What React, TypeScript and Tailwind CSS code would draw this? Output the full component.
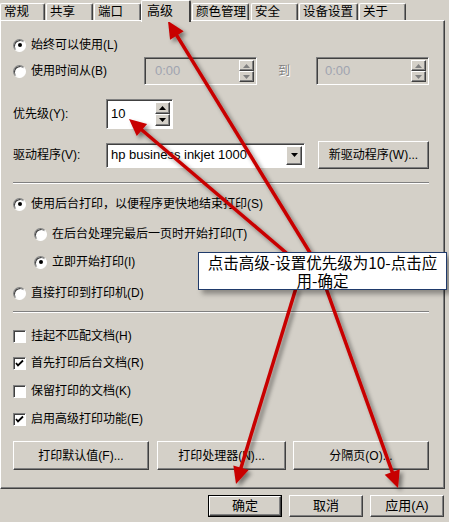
import React from "react";

const sunken =
  "border border-t-[#808080] border-l-[#808080] border-b-white border-r-white shadow-[inset_1px_1px_0_#404040]";
const raised =
  "border border-t-white border-l-white border-b-[#404040] border-r-[#404040] shadow-[inset_-1px_-1px_0_#808080]";

const tabs = [
  { label: "常规", w: "w-[45px]", ml: "ml-0" },
  { label: "共享", w: "w-[47px]", ml: "ml-[1px]" },
  { label: "端口", w: "w-[47px]", ml: "ml-[1px]" },
  { label: "高级", w: "w-[50px]", ml: "ml-0", active: true },
  { label: "颜色管理", w: "w-[57px]", ml: "ml-[1px]" },
  { label: "安全", w: "w-[47px]", ml: "ml-[2px]" },
  { label: "设备设置", w: "w-[59px]", ml: "ml-[1px]" },
  { label: "关于", w: "w-[47px]", ml: "ml-[1px]" },
];

function Triangle({ up, gray }: { up?: boolean; gray?: boolean }) {
  return (
    <svg width="7" height="4" viewBox="0 0 7 4">
      <polygon
        points={up ? "3.5,0 7,4 0,4" : "0,0 7,0 3.5,4"}
        fill={gray ? "#808080" : "#000"}
      />
    </svg>
  );
}

function Spinner({ gray }: { gray?: boolean }) {
  return (
    <div className="flex flex-col w-[15px] h-full">
      <div className={`${raised} flex-1 flex items-center justify-center bg-[#d4d0c8]`}>
        <Triangle up gray={gray} />
      </div>
      <div className={`${raised} flex-1 flex items-center justify-center bg-[#d4d0c8]`}>
        <Triangle gray={gray} />
      </div>
    </div>
  );
}

function Radio({ checked }: { checked?: boolean }) {
  return (
    <div className="w-[13px] h-[13px] rounded-full bg-white border border-t-[#808080] border-l-[#808080] border-b-white border-r-white shadow-[inset_1px_1px_0_#404040] flex items-center justify-center shrink-0">
      {checked && <div className="w-[4px] h-[4px] rounded-full bg-black" />}
    </div>
  );
}

function Check({ checked }: { checked?: boolean }) {
  return (
    <div className={`${sunken} w-[13px] h-[13px] bg-white flex items-center justify-center shrink-0`}>
      {checked && (
        <svg width="9" height="9" viewBox="0 0 9 9">
          <path d="M1 4 L3 6.5 L8 1.5" stroke="#000" strokeWidth="1.8" fill="none" />
        </svg>
      )}
    </div>
  );
}

function Arrow({ x1, y1, x2, y2 }: { x1: number; y1: number; x2: number; y2: number }) {
  const len = Math.hypot(x2 - x1, y2 - y1);
  const ux = (x2 - x1) / len;
  const uy = (y2 - y1) / len;
  const L = 17;
  const W = 8;
  const bx = x2 - ux * L;
  const by = y2 - uy * L;
  const nx = -uy;
  const ny = ux;
  const pts = `${x2},${y2} ${bx + nx * W},${by + ny * W} ${bx - nx * W},${by - ny * W}`;
  return (
    <g filter="url(#shadow)">
      <line x1={x1} y1={y1} x2={bx + ux * 2} y2={by + uy * 2} stroke="#c80000" strokeWidth="3.5" />
      <polygon points={pts} fill="#c80000" />
    </g>
  );
}

export default function App() {
  return (
    <div className="relative w-[449px] h-[522px] overflow-hidden bg-[#d4d0c8] text-[12px] text-black font-['Liberation_Sans','Noto_Sans_CJK_SC',sans-serif]">
      {/* tab strip */}
      <div className="flex items-end h-[20px]">
        {tabs.map((t) =>
          t.active ? (
            <div
              key={t.label}
              className={`${t.w} ${t.ml} relative z-10 h-[22px] -mb-[2px] bg-[#d4d0c8] border-t border-l border-t-white border-l-white border-r-2 border-r-[#404040] rounded-t-[2px] pl-[5px] pt-[2px] leading-[16px] text-[13px] whitespace-nowrap`}
            >
              {t.label}
            </div>
          ) : (
            <div
              key={t.label}
              className={`${t.w} ${t.ml} h-[17px] border-t border-l border-t-white border-l-white border-r border-r-[#404040] shadow-[inset_-1px_0_0_#808080] rounded-t-[2px] pl-[3px] leading-[16px] text-[12.5px] whitespace-nowrap overflow-hidden`}
            >
              {t.label}
            </div>
          )
        )}
      </div>

      {/* panel */}
      <div className="w-[445px] h-[469px] border-t border-l border-t-white border-l-white border-r border-b border-r-[#404040] border-b-[#404040] shadow-[inset_-1px_-1px_0_#808080] flex flex-col">
        <div className="mt-[14px] h-[20px] flex items-center pl-[12px] gap-[5px]">
          <Radio checked />
          <span>始终可以使用(L)</span>
        </div>

        <div className="mt-[2px] h-[28px] flex items-center pl-[12px]">
          <Radio />
          <span className="ml-[5px] w-[113px]">使用时间从(B)</span>
          <div className={`${sunken} w-[113px] h-[28px] bg-[#d4d0c8] flex items-center justify-between pl-[10px] pr-[2px] py-[2px]`}>
            <span className="text-[13px] text-[#a0a4b0]">0:00</span>
            <Spinner gray />
          </div>
          <span className="ml-[21px] w-[38px] text-[#808080] [text-shadow:1px_1px_0_#fff]">到</span>
          <div className={`${sunken} w-[113px] h-[28px] bg-[#d4d0c8] flex items-center justify-between pl-[8px] pr-[2px] py-[2px]`}>
            <span className="text-[13px] text-[#a0a4b0]">0:00</span>
            <Spinner gray />
          </div>
        </div>

        <div className="mt-[14px] h-[30px] flex items-center pl-[12px]">
          <span className="w-[93px]">优先级(Y):</span>
          <div className={`${sunken} w-[67px] h-[30px] bg-white flex items-center justify-between pl-[4px] pr-[2px] py-[2px]`}>
            <span className="text-[13px]">10</span>
            <Spinner />
          </div>
        </div>

        <div className="mt-[12px] h-[28px] flex items-center pl-[12px]">
          <span className="w-[93px]">驱动程序(V):</span>
          <div className={`${sunken} w-[199px] h-[25px] bg-white flex items-center justify-between pl-[4px] pr-[2px] py-[2px]`}>
            <span className="text-[13px]">hp business inkjet 1000</span>
            <div className={`${raised} w-[16px] h-full bg-[#d4d0c8] flex items-center justify-center`}>
              <Triangle />
            </div>
          </div>
          <div className={`${raised} ml-[13px] w-[111px] h-[28px] flex items-center justify-center`}>
            新驱动程序(W)...
          </div>
        </div>

        <div className="mt-[13px] ml-[12px] w-[416px] h-[2px] border-t border-t-[#808080] border-b border-b-white" />

        <div className="mt-[10px] h-[20px] flex items-center pl-[12px] gap-[5px]">
          <Radio checked />
          <span>使用后台打印，以便程序更快地结束打印(S)</span>
        </div>
        <div className="mt-[10px] h-[20px] flex items-center pl-[33px] gap-[5px]">
          <Radio />
          <span>在后台处理完最后一页时开始打印(T)</span>
        </div>
        <div className="mt-[8px] h-[20px] flex items-center pl-[33px] gap-[5px]">
          <Radio checked />
          <span>立即开始打印(I)</span>
        </div>
        <div className="mt-[11px] h-[20px] flex items-center pl-[12px] gap-[5px]">
          <Radio />
          <span>直接打印到打印机(D)</span>
        </div>

        <div className="mt-[8px] ml-[12px] w-[416px] h-[2px] border-t border-t-[#808080] border-b border-b-white" />

        <div className="mt-[13px] h-[20px] flex items-center pl-[12px] gap-[5px]">
          <Check />
          <span>挂起不匹配文档(H)</span>
        </div>
        <div className="mt-[7px] h-[20px] flex items-center pl-[12px] gap-[5px]">
          <Check checked />
          <span>首先打印后台文档(R)</span>
        </div>
        <div className="mt-[8px] h-[20px] flex items-center pl-[12px] gap-[5px]">
          <Check />
          <span>保留打印的文档(K)</span>
        </div>
        <div className="mt-[8px] h-[20px] flex items-center pl-[12px] gap-[5px]">
          <Check checked />
          <span>启用高级打印功能(E)</span>
        </div>

        <div className="mt-[12px] h-[29px] flex pl-[12px]">
          <div className={`${raised} w-[136px] flex items-center justify-center`}>打印默认值(F)...</div>
          <div className={`${raised} ml-[8px] w-[129px] flex items-center justify-center`}>打印处理器(N)...</div>
          <div className={`${raised} ml-[7px] w-[136px] flex items-center justify-center`}>分隔页(O)...</div>
        </div>
      </div>

      {/* dialog buttons */}
      <div className="mt-[6px] h-[22px] flex justify-end pr-[5px] gap-[7px] text-[13px]">
        <div className="w-[74px] border border-black">
          <div className={`${raised} h-full flex items-center justify-center`}>确定</div>
        </div>
        <div className={`${raised} w-[74px] flex items-center justify-center`}>取消</div>
        <div className={`${raised} w-[74px] flex items-center justify-center`}>应用(A)</div>
      </div>

      {/* annotation arrows */}
      <svg className="absolute inset-0 pointer-events-none" width="449" height="522">
        <defs>
          <filter id="shadow" x="-20%" y="-20%" width="140%" height="140%">
            <feDropShadow dx="3" dy="3" stdDeviation="2" floodColor="#000" floodOpacity="0.45" />
          </filter>
        </defs>
        <Arrow x1={312} y1={256} x2={168} y2={21} />
        <Arrow x1={290} y1={256} x2={129} y2={119} />
        <Arrow x1={296} y1={288} x2={236} y2={484} />
        <Arrow x1={326} y1={288} x2={398} y2={488} />
      </svg>

      {/* annotation callout */}
      <div className="absolute left-[198px] top-[252px] w-[249px] h-[38px] bg-white border-[1.5px] border-[#1f3a6b] shadow-[4px_4px_5px_rgba(0,0,0,0.35)] flex items-center justify-center">
        <p className="text-center text-[15.5px] leading-[18px] whitespace-nowrap font-['Noto_Sans_CJK_SC',sans-serif]">
          点击高级-设置优先级为10-点击应
          <br />
          用-确定
        </p>
      </div>
    </div>
  );
}
